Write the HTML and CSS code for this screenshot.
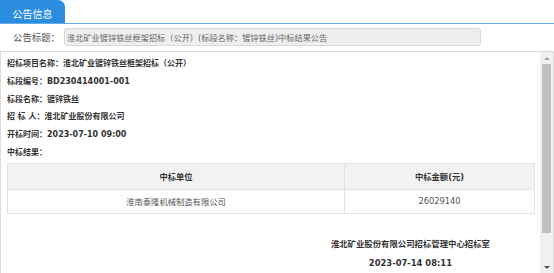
FILE: index.html
```html
<!DOCTYPE html>
<html lang="zh-CN">
<head>
<meta charset="utf-8">
<title>公告信息</title>
<link rel="stylesheet" href="styles.css">
</head>
<body>
<div class="tabs">
  <div class="tab">公告信息</div>
</div>
<div class="title-row">
  <span class="label">公告标题：</span>
  <div class="input">淮北矿业镀锌铁丝框架招标（公开）(标段名称：镀锌铁丝)中标结果公告</div>
</div>
<div class="content">
  <div class="doc">
    <p class="line">招标项目名称：淮北矿业镀锌铁丝框架招标（公开）</p>
    <p class="line">标段编号：BD230414001-001</p>
    <p class="line">标段名称：镀锌铁丝</p>
    <p class="line">招 标 人：淮北矿业股份有限公司</p>
    <p class="line">开标时间：2023-07-10 09:00</p>
    <p class="line">中标结果：</p>
    <table class="result">
      <thead>
        <tr><th class="c1">中标单位</th><th class="c2">中标金额(元)</th></tr>
      </thead>
      <tbody>
        <tr><td>淮南泰隆机械制造有限公司</td><td>26029140</td></tr>
      </tbody>
    </table>
    <div class="sign">
      <div class="sign-inner">
        <p>淮北矿业股份有限公司招标管理中心招标室</p>
        <p>2023-07-14 08:11</p>
      </div>
    </div>
  </div>
  <div class="scrollbar">
    <div class="arrow up"></div>
    <div class="thumb"></div>
    <div class="arrow down"></div>
  </div>
</div>
</body>
</html>
```
FILE: styles.css
```css
html, body {
  margin: 0;
  padding: 0;
  background: #fff;
}
body {
  width: 554px;
  height: 273px;
  overflow: hidden;
  font-family: "DejaVu Sans", "Noto Sans CJK SC", sans-serif;
  color: #333;
}
.tabs {
  height: 23px;
  border-bottom: 1px solid #66abe5;
  display: flex;
}
.tab {
  width: 65px;
  height: 23px;
  background: #2b8de0;
  color: #fff;
  border-top-right-radius: 7px;
  font-family: "Noto Sans CJK SC", sans-serif;
  font-size: 10px;
  display: flex;
  align-items: center;
  justify-content: center;
  padding-top: 3px;
  box-sizing: border-box;
}
.title-row {
  display: flex;
  align-items: center;
  padding: 4px 0 4px 13px;
  height: 18px;
}
.label {
  font-family: "Noto Sans CJK SC", sans-serif;
  font-size: 9.4px;
  color: #555;
  width: 51px;
}
.input {
  width: 417px;
  height: 18px;
  box-sizing: border-box;
  border: 1px solid #d9d9d9;
  border-radius: 3px;
  background: #eeeeee;
  font-size: 8.2px;
  color: #666;
  padding-left: 2px;
  display: flex;
  align-items: center;
  white-space: nowrap;
}
.content {
  margin-top: 1px;
  height: 221px;
  border: 1px solid #dcdcdc;
  display: flex;
  overflow: hidden;
}
.doc {
  flex: 1;
  padding: 3px 6px 0 6px;
  overflow: hidden;
}
.line {
  margin: 0;
  font-size: 8px;
  font-weight: bold;
  line-height: 17.8px;
  color: #333;
  white-space: nowrap;
}
.result {
  margin-top: 1px;
  width: 528px;
  border-collapse: collapse;
  font-size: 8.3px;
}
.result th, .result td {
  border: 1px solid #e3e3e3;
  text-align: center;
  padding: 0;
}
.result th {
  height: 25px;
  background: #f2f2f2;
  font-weight: bold;
  color: #333;
}
.result td {
  height: 23px;
  color: #555;
  font-weight: normal;
}
.result .c1 { width: 336px; }
.sign {
  display: flex;
  justify-content: flex-end;
  padding-right: 44px;
  margin-top: 21px;
}
.sign-inner {
  text-align: center;
  font-weight: bold;
  font-size: 8.4px;
  color: #333;
}
.sign-inner p {
  margin: 0;
  line-height: 19px;
}
.scrollbar {
  width: 13px;
  background: #f1f1f1;
  display: flex;
  flex-direction: column;
  align-items: center;
}
.arrow {
  height: 12px;
  width: 13px;
  display: flex;
  align-items: center;
  justify-content: center;
}
.arrow::before {
  content: "";
  width: 0;
  height: 0;
  border-left: 3px solid transparent;
  border-right: 3px solid transparent;
}
.up::before { border-bottom: 3px solid #a3a3a3; }
.down::before { border-top: 3px solid #505050; }
.thumb {
  width: 9px;
  flex: 1;
  background: #c1c1c1;
  margin: 0 0 28px 0;
}
```
